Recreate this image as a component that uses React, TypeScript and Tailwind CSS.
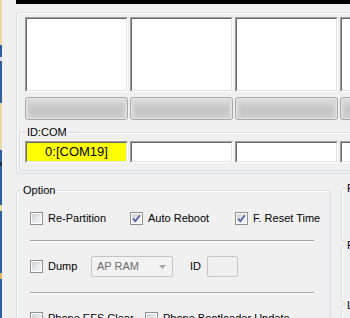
import React from 'react';

// Win7 style sunken field (two-tone bevel)
function Sunken({ className = '', children }: { className?: string; children?: React.ReactNode }) {
  return (
    <div
      className={`border border-t-[#a0a0a0] border-l-[#a0a0a0] border-b-white border-r-white shrink-0 ${className}`}
    >
      <div className="w-full h-full border border-t-[#696969] border-l-[#696969] border-b-[#e3e3e3] border-r-[#e3e3e3] flex items-center justify-center">
        {children}
      </div>
    </div>
  );
}

function ProgressBar() {
  return (
    <div className="w-[103px] h-[23px] shrink-0 border border-[#a7a7a7] rounded-[3px] bg-[#e6e6e6] p-[1px]">
      <div className="w-full h-full rounded-[2px] bg-gradient-to-b from-[#dedede] via-[#c6c6c6] to-[#cdcdcd] shadow-[inset_4px_0_3px_-2px_#d8d8d8,inset_-4px_0_3px_-2px_#d8d8d8]" />
    </div>
  );
}

function Checkbox({ checked = false }: { checked?: boolean }) {
  return (
    <div className="w-[13px] h-[13px] shrink-0 border border-[#8e8f8f] bg-white p-[1px]">
      <div className="w-full h-full bg-gradient-to-br from-[#cfd2d6] to-[#f7f7f7] flex items-center justify-center">
        {checked && (
          <svg width="9" height="9" viewBox="0 0 9 9">
            <path d="M1.2 4.6 L3.4 7.2 L7.8 1.2" fill="none" stroke="#4a5f9e" strokeWidth="1.7" />
          </svg>
        )}
      </div>
    </div>
  );
}

function Check({ label, checked, width }: { label: string; checked?: boolean; width: string }) {
  return (
    <div className={`flex items-center h-[13px] shrink-0 ${width}`}>
      <Checkbox checked={checked} />
      <span className="ml-[5px] leading-[13px] whitespace-nowrap">{label}</span>
    </div>
  );
}

function GroupLabel({ text, left }: { text: string; left: string }) {
  return (
    <span className={`absolute -top-[7px] ${left} px-[1px] bg-[#f0f0f0] leading-[13px] whitespace-nowrap`}>
      {text}
    </span>
  );
}

const stripe = [
  'h-[45px] bg-[#e8d9a7]',
  'h-[12px] bg-[#2f609c]',
  'h-[4px] bg-[#d8dde6]',
  'h-[42px] bg-[#2f609c]',
  'h-[47px] bg-[#e8d9a7]',
  'h-[12px] bg-[#2f609c]',
  'h-[4px] bg-[#1e2f4a]',
  'h-[39px] bg-[#2f609c]',
  'h-[6px] bg-[#e8d9a7]',
  'h-[62px] bg-[#2f609c]',
  'h-[6px] bg-[#e2b46a]',
  'h-[39px] bg-[#2f609c]',
];

export default function App() {
  return (
    <div className="w-[350px] h-[318px] overflow-hidden bg-[#f0f0f0] flex font-['Liberation_Sans',Arial,sans-serif] text-[11px] text-black">
      {/* desktop edge behind the window */}
      <div className="w-[2px] shrink-0 flex flex-col">
        {stripe.map((c, i) => (
          <div key={i} className={c} />
        ))}
      </div>
      <div className="w-[14px] shrink-0" />

      <div className="flex-1 min-w-0 flex flex-col">
        <div className="h-[4px] bg-black shrink-0" />

        {/* Port panel */}
        <div className="mt-[8px] w-[520px] shrink-0 border border-r-0 border-[#d5dfe5] rounded-l-[3px] shadow-[inset_1px_1px_0_#fff] pb-[2px]">
          <div className="mt-[4px] ml-[8px] flex gap-[2px]">
            {[0, 1, 2, 3].map((i) => (
              <Sunken key={i} className="w-[103px] h-[75px] bg-white" />
            ))}
          </div>
          <div className="mt-[5px] ml-[8px] flex gap-[2px]">
            {[0, 1, 2, 3].map((i) => (
              <ProgressBar key={i} />
            ))}
          </div>

          <div className="relative mt-[12px] ml-[2px] border border-r-0 border-[#d5dfe5] rounded-l-[3px] shadow-[inset_1px_1px_0_#fff] pt-[8px] pb-[7px] pl-[5px]">
            <GroupLabel text="ID:COM" left="left-[6px]" />
            <div className="flex gap-[2px]">
              <Sunken className="w-[103px] h-[22px] bg-[#ffff00]">
                <span className="text-[13px] leading-[18px] whitespace-nowrap">0:[COM19]</span>
              </Sunken>
              {[0, 1, 2].map((i) => (
                <Sunken key={i} className="w-[103px] h-[22px] bg-white" />
              ))}
            </div>
          </div>
        </div>

        <div className="mt-[14px] flex items-start">
          {/* Option group */}
          <div className="relative mt-[2px] w-[315px] h-[200px] shrink-0 border border-[#d5dfe5] rounded-[3px] shadow-[inset_1px_1px_0_#fff] pl-[13px] pt-[21px]">
            <GroupLabel text="Option" left="left-[5px]" />

            <div className="flex items-center">
              <Check label="Re-Partition" width="w-[100px]" />
              <Check label="Auto Reboot" checked width="w-[105px]" />
              <Check label="F. Reset Time" checked width="w-[90px]" />
            </div>

            <div className="mt-[15px] w-[284px] h-[2px] border-t border-b border-t-[#a0a0a0] border-b-white" />

            <div className="mt-[14px] h-[21px] flex items-center">
              <Check label="Dump" width="w-[61px]" />
              <div className="w-[82px] h-[21px] shrink-0 border border-[#c3c3c3] rounded-[2px] bg-[#f2f2f2] flex items-center pl-[5px] pr-[6px] text-[#6d6d6d]">
                <span className="flex-1 leading-[13px]">AP RAM</span>
                <svg width="7" height="4" viewBox="0 0 7 4">
                  <path d="M0 0 H7 L3.5 4 Z" fill="#a8a8a8" />
                </svg>
              </div>
              <span className="ml-[17px] leading-[13px]">ID</span>
              <div className="ml-[6px] w-[31px] h-[21px] shrink-0 border border-[#c6c6c6] rounded-[2px] bg-[#f0f0f0]" />
            </div>

            <div className="mt-[15px] w-[284px] h-[2px] border-t border-b border-t-[#a0a0a0] border-b-white" />

            <div className="mt-[18px] flex items-center">
              <Check label="Phone EFS Clear" width="w-[115px]" />
              <Check label="Phone Bootloader Update" width="w-[160px]" />
            </div>
          </div>

          {/* right column groups */}
          <div className="ml-[10px] flex flex-col shrink-0">
            <div className="relative w-[100px] h-[54px] border border-[#d5dfe5] rounded-[3px] shadow-[inset_1px_1px_0_#fff]">
              <GroupLabel text="Files" left="left-[4px]" />
            </div>
            <div className="relative mt-[3px] w-[100px] h-[58px] border border-[#d5dfe5] rounded-[3px] shadow-[inset_1px_1px_0_#fff]">
              <GroupLabel text="Pit" left="left-[4px]" />
            </div>
            <div className="relative mt-[2px] w-[100px] h-[60px] border border-[#d5dfe5] rounded-[3px] shadow-[inset_1px_1px_0_#fff]">
              <GroupLabel text="Log" left="left-[4px]" />
            </div>
          </div>
        </div>
      </div>
    </div>
  );
}
